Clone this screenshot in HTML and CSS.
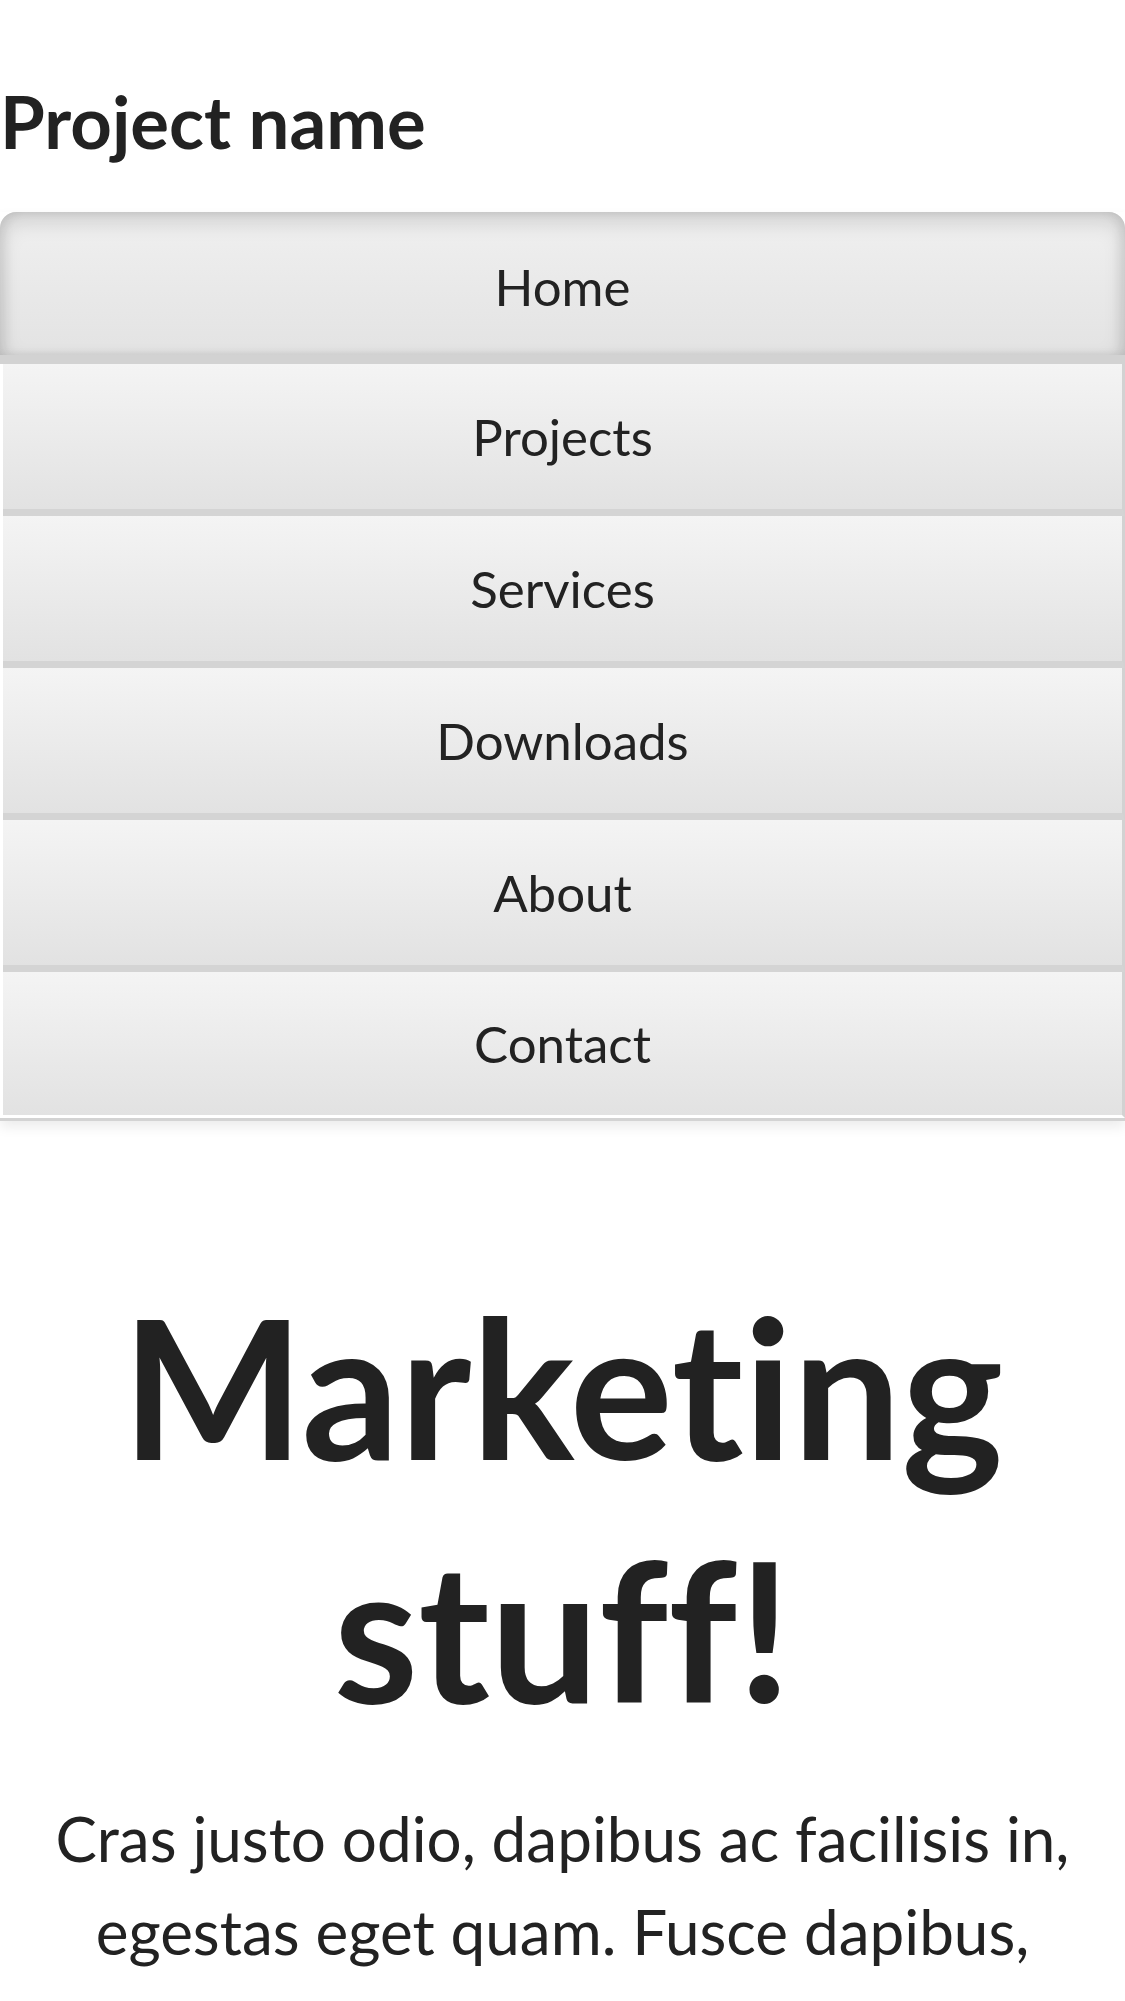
FILE: index.html
```html
<!DOCTYPE html>
<html lang="en">
<head>
<meta charset="utf-8">
<title>Justified Nav</title>
<link rel="stylesheet" href="styles.css">
</head>
<body>
<div class="container">
  <div class="masthead">
    <h3 class="brand">Project name</h3>
    <nav>
      <ul class="nav-justified">
        <li class="active"><a href="#">Home</a></li>
        <li><a href="#">Projects</a></li>
        <li><a href="#">Services</a></li>
        <li><a href="#">Downloads</a></li>
        <li><a href="#">About</a></li>
        <li class="last"><a href="#">Contact</a></li>
      </ul>
    </nav>
  </div>
  <div class="jumbotron">
    <h1>Marketing stuff!</h1>
    <p>Cras justo odio, dapibus ac facilisis in, egestas eget quam. Fusce dapibus, tellus ac cursus commodo, tortor mauris condimentum nibh, ut fermentum massa justo sit amet risus.</p>
  </div>
</div>
</body>
</html>
```

FILE: styles.css
```css
html, body {
  margin: 0;
  padding: 0;
  background: #fff;
}
body {
  font-family: Lato, "Open Sans", "Liberation Sans", sans-serif;
  color: #222;
  overflow: hidden;
  font-variant-ligatures: none;
  font-feature-settings: "liga" 0, "clig" 0, "dlig" 0;
}
.brand {
  margin: 81px 0 51px 0;
  font-size: 72.5px;
  line-height: 1.1;
  font-weight: 700;
  color: #222;
}
.nav-justified {
  list-style: none;
  margin: 0;
  padding: 0;
  border-bottom: 3px solid #d3d3d3;
  box-shadow: 0 6px 12px rgba(0,0,0,0.08);
}
.nav-justified li a {
  display: flex;
  align-items: center;
  justify-content: center;
  box-sizing: border-box;
  height: 152px;
  margin-left: 3px;
  border-right: 3px solid #d2d2d2;
  border-bottom: 7px solid #d4d4d4;
  background-image: linear-gradient(to bottom, #f4f4f4 0%, #e2e2e2 100%);
  color: #222;
  text-decoration: none;
  font-size: 51px;
}
.nav-justified li.active a {
  margin-left: 0;
  border-right: 0;
  border-radius: 16px 16px 0 0;
  height: 152px;
  padding-top: 7px;
  border-bottom: 9px solid #d2d2d2;
  background-image: linear-gradient(to bottom, #f0f0f0 0%, #e3e3e3 100%);
  box-shadow: inset 0 9px 21px rgba(0,0,0,0.15), inset 6px 0 10px rgba(0,0,0,0.06), inset -6px 0 10px rgba(0,0,0,0.06);
}
.nav-justified li.last a {
  height: 146px;
  border-bottom: 3px solid #fff;
}
.jumbotron {
  margin-top: 143px;
  padding: 0 40px;
  text-align: center;
}
.jumbotron h1 {
  margin: 0;
  font-size: 193px;
  line-height: 243px;
  font-weight: 700;
  color: #222;
}
.jumbotron p {
  margin: 42px 0 0 0;
  font-size: 62px;
  line-height: 93px;
  font-weight: 400;
  color: #222;
}
```
